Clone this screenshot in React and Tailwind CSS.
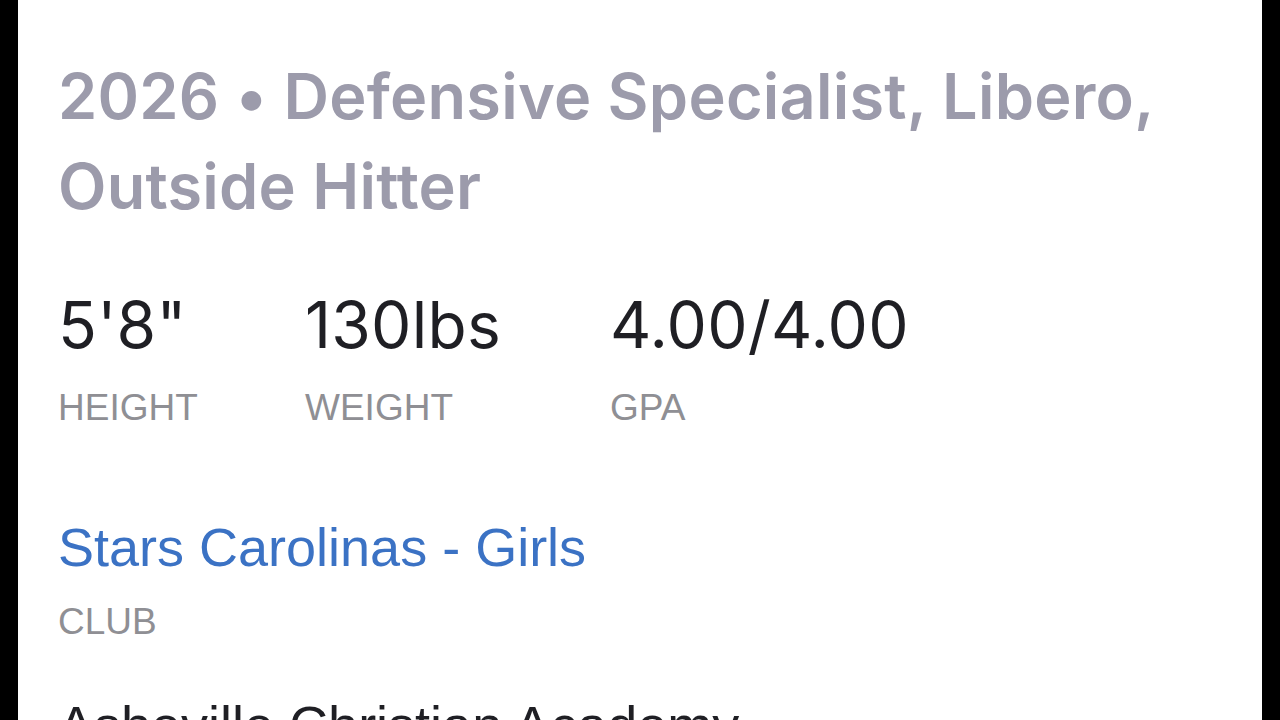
export default function App() {
    const stats = [
        { value: '5\'8"', label: 'HEIGHT', width: 'w-[247px]' },
        { value: '130lbs', label: 'WEIGHT', width: 'w-[305px]' },
        { value: '4.00/4.00', label: 'GPA', width: 'w-auto' },
    ];

    return (
        <div className="h-[720px] overflow-hidden bg-black px-[18px]">
            <div className="h-full bg-white pl-[40px] pt-[51px]">
                <h1 className="font-['Inter',sans-serif] text-[63px] font-semibold leading-[90px] tracking-[0.25px] text-[#9c9bab]">
                    2026 • Defensive Specialist, Libero,
                    <br />
                    Outside Hitter
                </h1>

                <div className="mt-[62px] flex">
                    {stats.map((stat) => (
                        <div key={stat.label} className={stat.width}>
                            <div className="font-['Inter',sans-serif] text-[64px] leading-[64px] tracking-[0.25px] text-[#1f1f24]">
                                {stat.value}
                            </div>
                            <div className="mt-[32px] font-['Liberation_Sans',sans-serif] text-[37px] leading-[37px] text-[#8f8f94]">
                                {stat.label}
                            </div>
                        </div>
                    ))}
                </div>

                <div className="mt-[94px] font-['Liberation_Sans',sans-serif] text-[54px] leading-[54px] text-[#3b72c4]">
                    Stars Carolinas - Girls
                </div>
                <div className="mt-[29px] font-['Liberation_Sans',sans-serif] text-[37px] leading-[37px] text-[#8f8f94]">
                    CLUB
                </div>

                <div className="mt-[58px] font-['Liberation_Sans',sans-serif] text-[54px] font-medium leading-[54px] text-[#1f1f24]">
                    Asheville Christian Academy
                </div>
            </div>
        </div>
    );
}
